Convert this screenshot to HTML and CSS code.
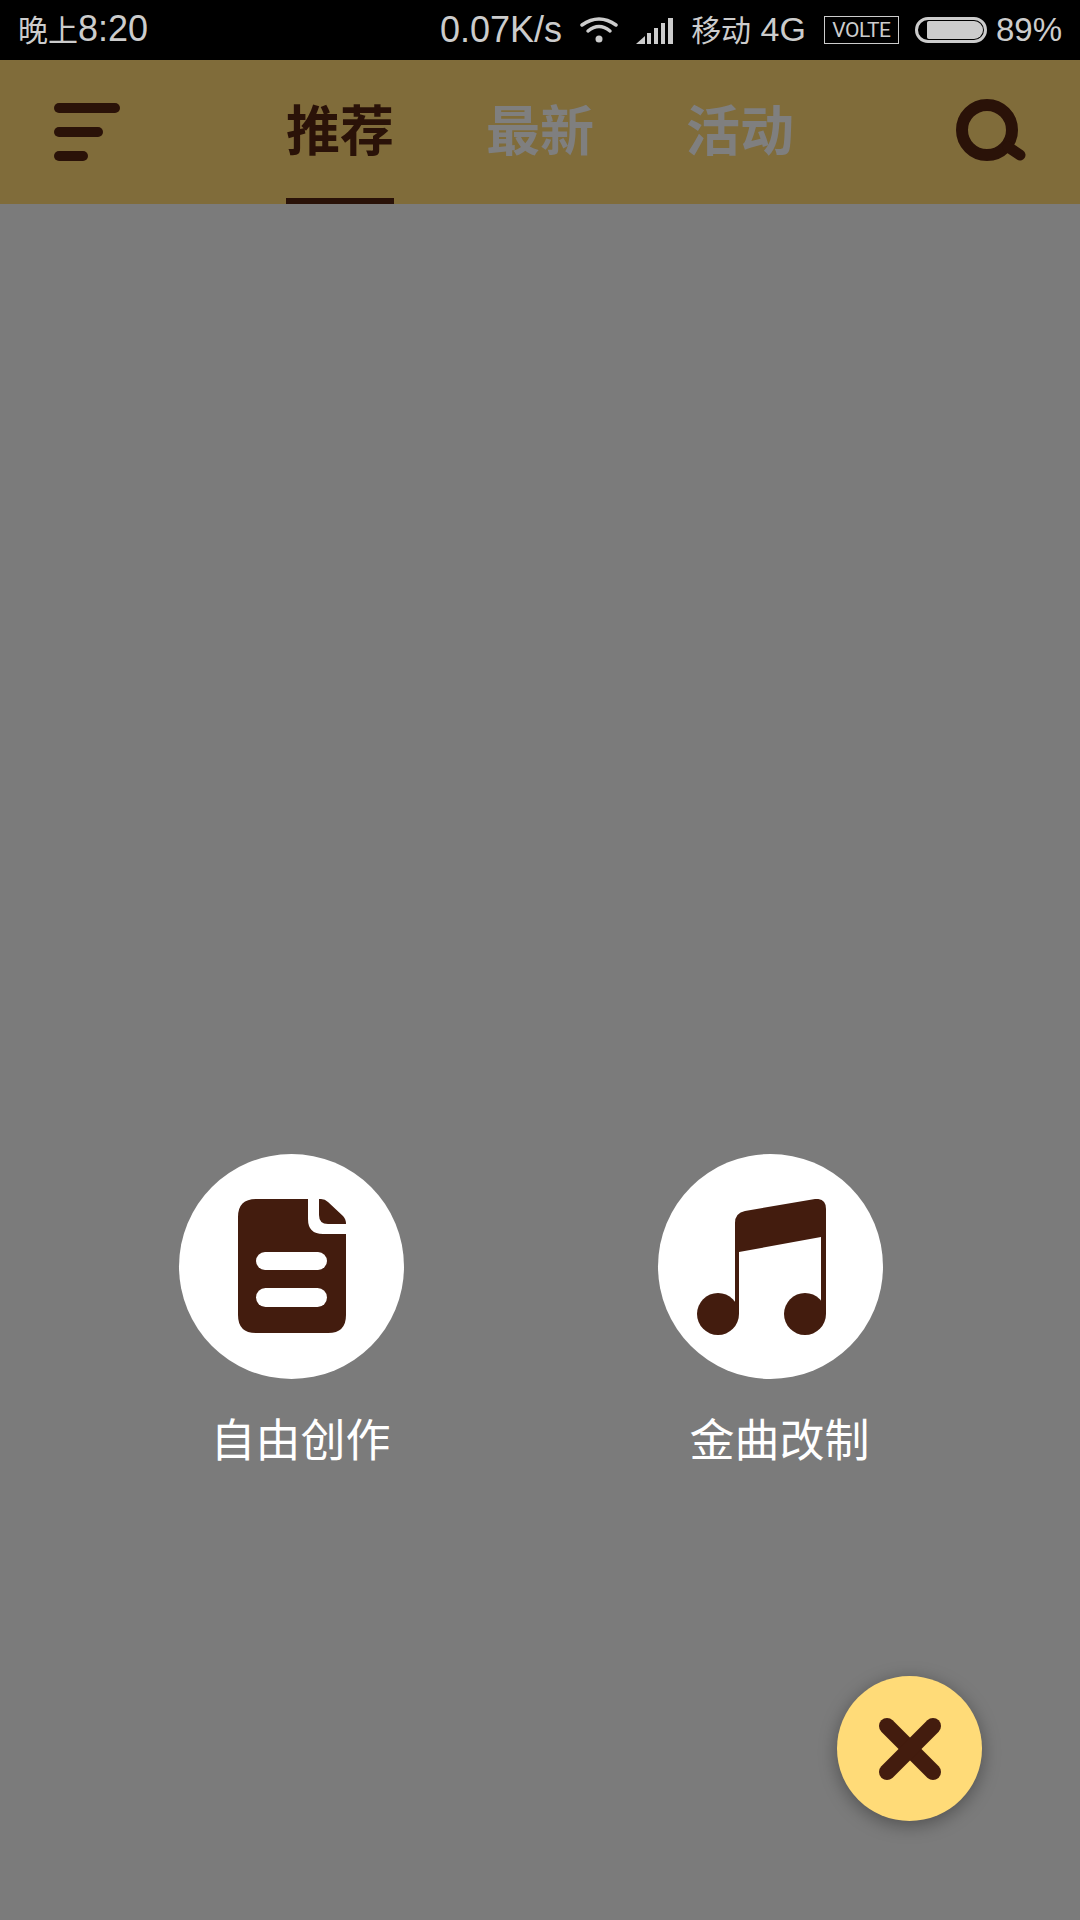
FILE: index.html
```html
<!DOCTYPE html>
<html lang="zh">
<head>
<meta charset="utf-8">
<title>推荐</title>
<link rel="stylesheet" href="styles.css">
</head>
<body>

<div class="status-bar">
	<div class="status-time"><span class="cjk">晚上</span>8:20</div>
	<div class="status-right">
		<span class="speed">0.07K/s</span>
		<svg class="wifi" width="38" height="28" viewBox="0 0 38 28">
			<path d="M2 9 Q19 -3 36 9" fill="none" stroke="#ccc" stroke-width="3.5" stroke-linecap="round"/>
			<path d="M8 15 Q19 6 30 15" fill="none" stroke="#ccc" stroke-width="3.5" stroke-linecap="round"/>
			<circle cx="19" cy="23" r="3.5" fill="#ccc"/>
		</svg>
		<svg class="signal" width="37" height="27" viewBox="0 0 37 27">
			<path d="M0 27 L9 19 V27 Z" fill="#ccc"/>
			<rect x="11" y="16" width="4" height="11" fill="#ccc"/>
			<rect x="18" y="11" width="4" height="16" fill="#ccc"/>
			<rect x="25" y="6" width="4" height="21" fill="#ccc"/>
			<rect x="32" y="1" width="5" height="26" fill="#ccc"/>
		</svg>
		<span><span class="cjk">移动</span> 4G</span>
		<span class="volte">VOLTE</span>
		<div class="battery"><div class="battery-fill"></div></div>
		<span class="battery-pct">89%</span>
	</div>
</div>

<div class="header">
	<div class="menu-icon">
		<span class="menu-bar bar1"></span>
		<span class="menu-bar bar2"></span>
		<span class="menu-bar bar3"></span>
	</div>
	<div class="tabs">
		<div class="tab active">推荐</div>
		<div class="tab">最新</div>
		<div class="tab">活动</div>
	</div>
	<svg class="search-icon" width="70" height="62" viewBox="0 0 70 62">
		<circle cx="31" cy="31" r="25" fill="none" stroke="#2a1208" stroke-width="12"/>
		<line x1="52" y1="48" x2="64" y2="56" stroke="#2a1208" stroke-width="11" stroke-linecap="round"/>
	</svg>
</div>

<div class="main">
	<div class="actions">
		<div class="action">
			<div class="action-circle">
				<svg class="doc-icon" width="108" height="134" viewBox="0 0 108 134">
					<path d="M18 0 H70 V20 Q70 35 85 35 H108 V116 Q108 134 90 134 H18 Q0 134 0 116 V18 Q0 0 18 0 Z" fill="#431c0e"/>
					<path d="M81 0 H83 Q87 0 90 3 L105 17 Q108 20 108 25 H90 Q81 25 81 16 Z" fill="#431c0e"/>
					<rect x="18" y="53" width="71" height="18" rx="9" fill="#fff"/>
					<rect x="18" y="89" width="71" height="19" rx="9.5" fill="#fff"/>
				</svg>
			</div>
			<div class="action-label">自由创作</div>
		</div>
		<div class="action">
			<div class="action-circle">
				<svg class="note-icon" width="129" height="136" viewBox="0 0 129 136">
					<path d="M38 24 Q38 14 48 12 L118 0 Q129 -1 129 10 V115 H124 V38 L42 53 V115 H38 Z" fill="#431c0e"/>
					<circle cx="21" cy="115" r="21" fill="#431c0e"/>
					<circle cx="108" cy="115" r="21" fill="#431c0e"/>
				</svg>
			</div>
			<div class="action-label">金曲改制</div>
		</div>
	</div>

	<div class="fab">
		<svg width="62" height="62" viewBox="0 0 62 62">
			<line x1="8" y1="8" x2="54" y2="54" stroke="#431c0e" stroke-width="16" stroke-linecap="round"/>
			<line x1="54" y1="8" x2="8" y2="54" stroke="#431c0e" stroke-width="16" stroke-linecap="round"/>
		</svg>
	</div>
</div>

</body>
</html>
```

FILE: styles.css
```css
body {
	margin: 0px;
	padding: 0px;
	width: 1080px;
	height: 1920px;
	display: flex;
	flex-direction: column;
	background: #7b7b7b;
	font-family: "Liberation Sans", "Noto Sans CJK SC", sans-serif;
}

.status-bar {
	height: 60px;
	box-sizing: border-box;
	padding: 0px 18px;
	display: flex;
	align-items: center;
	justify-content: space-between;
	background: #000;
	color: #ccc;
	font-size: 34px;
	line-height: 56px;
}

.status-time {
	font-size: 36px;
}

.cjk {
	font-size: 30px;
}

.speed {
	font-size: 36px;
}

.status-right {
	display: flex;
	align-items: center;
	gap: 18px;
}

.volte {
	width: 73px;
	height: 26px;
	line-height: 26px;
	border: 1px solid #ccc;
	text-align: center;
	font-family: Roboto, "Liberation Sans", sans-serif;
	font-size: 21px;
	letter-spacing: -0.5px;
}

.battery {
	margin-left: -2px;
	width: 56px;
	height: 20px;
	padding: 0px 1px 0px 9px;
	border: 3px solid #ccc;
	border-radius: 13px;
	display: flex;
	align-items: center;
}

.battery-fill {
	width: 56px;
	height: 18px;
	background: #ccc;
	border-radius: 2px 10px 10px 2px;
}

.battery-pct {
	margin-left: -9px;
	font-size: 33px;
}

.header {
	height: 144px;
	padding: 0px 54px;
	display: flex;
	align-items: center;
	background: #806c3a;
}

.menu-icon {
	width: 66px;
	display: flex;
	flex-direction: column;
	gap: 14px;
}

.menu-bar {
	display: block;
	height: 10px;
	border-radius: 5px;
	background: #2a1208;
}

.bar1 { width: 66px; }
.bar2 { width: 49px; }
.bar3 { width: 34px; }

.tabs {
	margin-left: 166px;
	height: 144px;
	display: flex;
	gap: 92px;
}

.tab {
	height: 144px;
	box-sizing: border-box;
	line-height: 145px;
	font-size: 54px;
	font-weight: bold;
	color: #7f7f7f;
}

.tab.active {
	color: #2a1208;
	border-bottom: 6px solid #2a1208;
}

.search-icon {
	margin-left: auto;
	margin-bottom: 5px;
}

.main {
	position: relative;
	flex: 1;
	padding-top: 950px;
}

.actions {
	padding-left: 179px;
	display: flex;
	gap: 254px;
}

.action {
	width: 225px;
}

.action-circle {
	width: 225px;
	height: 225px;
	border-radius: 50%;
	background: #fff;
	display: flex;
	align-items: center;
	justify-content: center;
}

.doc-icon {
	margin-bottom: 2px;
}

.note-icon {
	margin-right: 18px;
}

.action-label {
	margin-top: 26px;
	padding-left: 18px;
	text-align: center;
	white-space: nowrap;
	font-size: 45px;
	color: #fff;
}

.fab {
	position: absolute;
	right: 98px;
	bottom: 99px;
	width: 145px;
	height: 145px;
	border-radius: 50%;
	background: #ffdb78;
	box-shadow: 0px 4px 18px rgba(0, 0, 0, 0.35);
	display: flex;
	align-items: center;
	justify-content: center;
}
```
